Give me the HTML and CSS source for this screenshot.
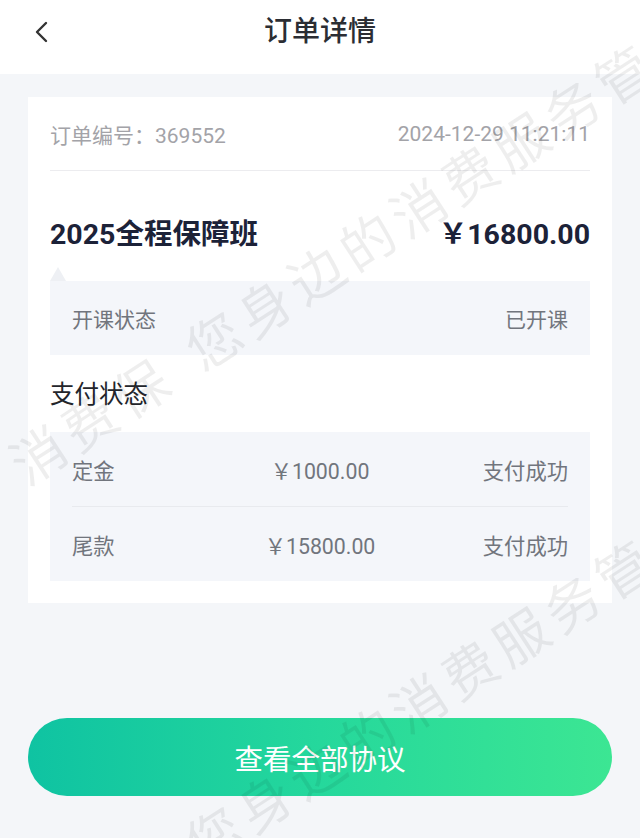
FILE: index.html
```html
<!DOCTYPE html>
<html lang="zh-CN">
<head>
  <meta charset="UTF-8">
  <meta name="viewport" content="width=device-width, initial-scale=1.0">
  <title>订单详情</title>
  <link rel="stylesheet" href="styles.css">
</head>

<body>
  <!-- 顶部导航 -->
  <header class="topbar">
    <a class="back" href="#" aria-label="返回">
      <svg width="16" height="24" viewBox="0 0 16 24">
        <polyline points="12,3 3,12 12,21" fill="none" stroke="#333" stroke-width="2.4" stroke-linecap="round" stroke-linejoin="round"/>
      </svg>
    </a>
    <h1>订单详情</h1>
  </header>

  <main class="page">
    <!-- 订单卡片 -->
    <section class="card">
      <div class="order-row">
        <span>订单编号：369552</span>
        <span>2024-12-29 11:21:11</span>
      </div>

      <div class="course">
        <span>2025全程保障班</span>
        <span>￥16800.00</span>
      </div>

      <div class="info-box status">
        <div class="info-row">
          <span>开课状态</span>
          <span class="right">已开课</span>
        </div>
      </div>

      <h2>支付状态</h2>

      <div class="info-box">
        <div class="pay-row">
          <span>定金</span>
          <span class="mid">￥1000.00</span>
          <span class="right">支付成功</span>
        </div>
        <div class="pay-row">
          <span>尾款</span>
          <span class="mid">￥15800.00</span>
          <span class="right">支付成功</span>
        </div>
      </div>
    </section>

    <button class="main-btn" type="button">查看全部协议</button>
  </main>

  <!-- 水印 -->
  <div class="watermark" aria-hidden="true">
    <div class="wm-line wm-1">消费保 您身边的消费服务管家</div>
    <div class="wm-line wm-2">消费保 您身边的消费服务管家</div>
  </div>
</body>
</html>
```

FILE: styles.css
```css
/* 基础 */
body {
  margin: 0;
  background-color: #f4f6f9;
  font-family: Roboto, "Noto Sans CJK SC", sans-serif;
  color: #333;
  min-height: 838px;
}

/* 顶部导航 */
.topbar {
  height: 74px;
  background-color: #fff;
  display: flex;
  align-items: center;
  justify-content: center;
  position: relative;
}

.topbar h1 {
  margin: 0;
  font-size: 28px;
  font-weight: 500;
  color: #2b2d33;
  line-height: 1;
  padding-bottom: 10px;
}

.back {
  position: absolute;
  left: 34px;
  top: 20px;
  display: flex;
}

/* 内容 */
.page {
  padding: 23px 28px 0;
}

.card {
  background-color: #fff;
  padding: 0 22px 22px;
}

.order-row {
  display: flex;
  justify-content: space-between;
  align-items: center;
  height: 73px;
  border-bottom: 1px solid #ececef;
  font-size: 21px;
  color: #a3a3a8;
}

.course {
  display: flex;
  justify-content: space-between;
  align-items: center;
  padding: 49px 0 31px;
  line-height: 30px;
  font-size: 28.5px;
  font-weight: 700;
  color: #1c2238;
}

.info-box {
  background-color: #f4f6fa;
  padding: 0 22px;
}

.status {
  position: relative;
}

.status::before {
  content: "";
  position: absolute;
  left: 0;
  top: -14px;
  border-left: 8px solid transparent;
  border-right: 8px solid transparent;
  border-bottom: 14px solid #eef0f4;
}

.info-row {
  display: flex;
  justify-content: space-between;
  align-items: center;
  height: 74px;
  font-size: 21px;
  color: #71757d;
}

h2 {
  margin: 25px 0 22px;
  font-size: 24.5px;
  font-weight: 400;
  line-height: 30px;
  color: #23252b;
}

.pay-row {
  display: grid;
  grid-template-columns: 1fr auto 1fr;
  align-items: center;
  height: 74px;
  font-size: 21.3px;
  color: #71757d;
}

.pay-row + .pay-row {
  border-top: 1px solid #e8eaee;
}

.pay-row .mid {
  text-align: center;
}

.right {
  text-align: right;
}

/* 按钮 */
.main-btn {
  display: block;
  width: 100%;
  height: 78px;
  margin-top: 115px;
  border: none;
  border-radius: 39px;
  background: linear-gradient(90deg, #0fc3a2 0%, #25d89c 50%, #3ce693 100%);
  color: #fff;
  font-family: inherit;
  font-size: 28.5px;
  cursor: pointer;
}

/* 水印 */
.watermark {
  position: fixed;
  inset: 0;
  overflow: hidden;
  pointer-events: none;
}

.wm-line {
  position: absolute;
  left: 17px;
  white-space: nowrap;
  font-size: 54px;
  letter-spacing: 7px;
  word-spacing: 6px;
  line-height: 1;
  color: rgba(0, 0, 0, 0.065);
  transform-origin: 0 50%;
  transform: rotate(-33deg);
}

.wm-1 {
  top: 445px;
}

.wm-2 {
  top: 940px;
}
```
